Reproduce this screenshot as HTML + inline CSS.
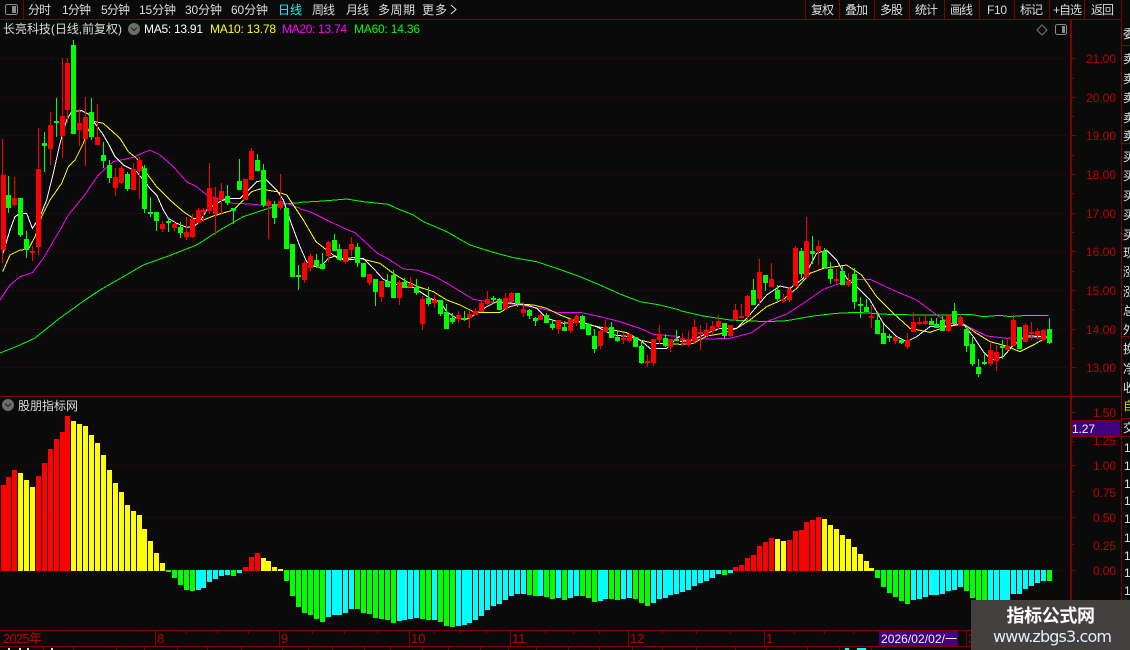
<!DOCTYPE html>
<html lang="zh">
<head>
<meta charset="utf-8">
<title>长亮科技</title>
<style>
html,body{margin:0;padding:0;background:#0a0a0a;width:1130px;height:650px;overflow:hidden}
svg{display:block}
text{font-family:"Liberation Sans","WenQuanYi Zen Hei","Noto Sans CJK SC",sans-serif;font-size:12px}
.tb text{fill:#dcdcdc}
.ax text{fill:#c00000}
.rc text{fill:#e4e4e4}
.ln{fill:none;stroke-width:3;shape-rendering:crispEdges}
</style>
</head>
<body>
<svg width="1130" height="650" viewBox="0 0 1130 650" xmlns="http://www.w3.org/2000/svg">
<rect width="1130" height="650" fill="#0a0a0a"/>

<!-- grid -->
<g stroke="#5c0c0c" stroke-width="1" stroke-dasharray="1 3" shape-rendering="crispEdges">
<path d="M1 58.5H1068M1 97.5H1068M1 135.5H1068M1 174.5H1068M1 213.5H1068M1 251.5H1068M1 290.5H1068M1 329.5H1068M1 367.5H1068M1 465.5H1068M1 517.5H1068M1 570.5H1068"/>
</g>

<!-- frame lines -->
<g stroke="#800000" fill="none" shape-rendering="crispEdges">
<path d="M0 19.5H1121.5M0 396.5H1121M0 630.5H1121M0 646.5H1121"/>
<path d="M23.5 0V19M805.5 0V19M839.5 0V19M874.5 0V19M909.5 0V19M944.5 0V19M979.5 0V19M1014.5 0V19M1049.5 0V19M1084.5 0V19M1121.5 0V650"/>
<path d="M1071 20V630" stroke-width="2"/>
<path d="M1072 420.5H1121M1072 436H1121" stroke-width="1.5"/>
<path d="M1071 58.5h5M1071 97.5h5M1071 135.5h5M1071 174.5h5M1071 213.5h5M1071 251.5h5M1071 290.5h5M1071 329.5h5M1071 367.5h5M1071 78.5h3M1071 116.5h3M1071 155.5h3M1071 193.5h3M1071 232.5h3M1071 271.5h3M1071 309.5h3M1071 348.5h3M1071 412.5h5M1071 441.5h3M1071 465.5h5M1071 491.5h3M1071 517.5h5M1071 544.5h3M1071 570.5h5"/>
<path d="M155.5 631V646M279.5 631V646M409.5 631V646M510.5 631V646M628.5 631V646M764.5 631V646M966.5 631V646M186.5 631v3M217.5 631v3M248.5 631v3M312.5 631v3M344.5 631v3M377.5 631v3M434.5 631v3M460.5 631v3M486.5 631v3M545.5 631v3M573.5 631v3M599.5 631v3M662.5 631v3M696.5 631v3M730.5 631v3M794.5 631v3M824.5 631v3M853.5 631v3"/>
<path d="M43.5 647v3M73.5 647v3M116.5 647v3M144.5 647v3M177.5 647v3M207.5 647v3M241.5 647v3M282.5 647v3M308.5 647v3M332.5 647v3M364.5 647v3M390.5 647v3M422.5 647v3M448.5 647v3M480.5 647v3M508.5 647v3M536.5 647v3M568.5 647v3M599.5 647v3M632.5 647v3M662.5 647v3M696.5 647v3M735.5 647v3M766.5 647v3M807.5 647v3M839.5 647v3M871.5 647v3"/>
<path d="M1122 45.5H1130M1122 143.5H1130M1122 239.5H1130M1122 336.5H1130M1122 418.5H1130M1122 436.5H1130"/>
</g>

<!-- toolbar -->
<rect x="5.5" y="4.5" width="12" height="10" rx="2" fill="none" stroke="#8a8a8a"/>
<rect x="12" y="6" width="4" height="7" fill="#8a8a8a"/>
<g class="tb">
<text x="28" y="14" textLength="23">分时</text>
<text x="62" y="14" textLength="29">1分钟</text>
<text x="101" y="14" textLength="29">5分钟</text>
<text x="139" y="14" textLength="37">15分钟</text>
<text x="185" y="14" textLength="37">30分钟</text>
<text x="231" y="14" textLength="37">60分钟</text>
<text x="278" y="14" textLength="24" style="fill:#00ffff">日线</text>
<text x="312" y="14" textLength="23">周线</text>
<text x="346" y="14" textLength="23">月线</text>
<text x="378" y="14" textLength="37">多周期</text>
<text x="422" y="14" textLength="25">更多</text>
<text x="811" y="14" textLength="23">复权</text>
<text x="845" y="14" textLength="23">叠加</text>
<text x="880" y="14" textLength="23">多股</text>
<text x="915" y="14" textLength="23">统计</text>
<text x="950" y="14" textLength="23">画线</text>
<text x="987" y="14" textLength="20">F10</text>
<text x="1020" y="14" textLength="23">标记</text>
<text x="1053" y="14" textLength="29">+自选</text>
<text x="1091" y="14" textLength="23">返回</text>
</g>
<path d="M451 5l5 4.5-5 4.5" fill="none" stroke="#dcdcdc"/>

<!-- main title -->
<text x="3" y="33" textLength="119" fill="#dcdcdc">长亮科技(日线,前复权)</text>
<circle cx="134" cy="29" r="6" fill="#6e6e6e"/>
<path d="M131 27.5l3 3 3-3" fill="none" stroke="#222" stroke-width="1.2"/>
<text x="144" y="33" textLength="59" fill="#ffffff">MA5: 13.91</text>
<text x="210" y="33" textLength="66" fill="#ffff00">MA10: 13.78</text>
<text x="282" y="33" textLength="65" fill="#ff00ff">MA20: 13.74</text>
<text x="354" y="33" textLength="66" fill="#00ff00">MA60: 14.36</text>
<path d="M1042 25l5 5-5 5-5-5z" fill="none" stroke="#777"/>
<rect x="1055.5" y="24.5" width="11" height="10" rx="2" fill="none" stroke="#8a8a8a"/>
<rect x="1062" y="26" width="3" height="7" fill="#8a8a8a"/>

<!-- MA lines -->
<g transform="translate(0,40) scale(.33333)">
<polyline class="ln" stroke="#00ff00" points="0,939 60,915 105,894 180,834 255,780 300,750 370,710 430,675 500,650 590,615 660,570 730,530 790,510 850,492 900,488"/>
<polyline class="ln" stroke="#ff00ff" points="0,780 30,735 60,710 97,698 130,655 180,570 205,525 250,470 295,405 340,365 400,352 425,340 450,330 480,345 520,380 560,425 590,440 620,465 660,478 700,490 750,492 800,497 860,490 900,505"/>
<polyline class="ln" stroke="#ffff00" points="8,695 30,645 60,630 85,628 105,590 125,530 150,480 185,430 205,380 225,360 250,310 265,270 285,245 310,250 330,268 360,295 385,335 410,355 440,400 470,440 510,480 550,515 580,535 610,540 640,528 700,510 730,480 755,455 780,447 830,455 860,465 880,495 900,525"/>
<polyline class="ln" stroke="#ffffff" points="9,640 30,570 45,530 60,520 80,520 97,565 120,530 140,480 160,400 180,310 200,240 215,215 245,212 265,222 285,250 310,285 330,320 345,350 370,375 410,395 430,420 450,445 470,465 490,510 505,535 530,550 560,562 580,560 600,545 620,510 650,490 680,475 720,475 745,450 770,425 800,420 830,450 850,480 870,540 885,580 900,620"/>
</g>
<g transform="translate(280,180) scale(.33333)">
<polyline class="ln" stroke="#00ff00" points="60,67 130,63 200,57 250,65 325,73 350,85 400,105 430,125 500,155 570,195 640,217 700,233 770,245 830,265 900,290 960,315 1020,342 1080,365 1140,375 1200,390"/>
<polyline class="ln" stroke="#ff00ff" points="60,87 90,95 150,125 200,148 225,158 260,190 290,218 330,240 370,267 410,270 460,287 510,315 580,358 620,365 680,370 720,375 780,385 830,397 900,397 960,410 1020,425 1080,445 1120,463 1200,470"/>
<polyline class="ln" stroke="#ffff00" points="60,105 70,120 108,185 140,210 180,240 220,232 260,240 300,250 340,280 380,305 420,322 460,335 500,360 540,375 580,395 610,398 660,397 690,380 720,372 760,375 800,385 840,405 880,420 930,435 1000,450 1040,458 1080,480 1120,490 1160,490 1200,493"/>
<polyline class="ln" stroke="#ffffff" points="60,200 80,245 100,258 120,262 145,235 165,228 200,240 250,235 280,265 310,298 340,310 370,320 400,322 420,335 450,355 480,365 500,395 530,415 560,418 590,400 620,380 650,365 700,370 740,375 770,385 800,415 850,430 900,425 950,440 1000,465 1050,470 1080,480 1110,505 1160,505 1190,475 1200,470"/>
</g>
<g transform="translate(680,200) scale(.33333)">
<polyline class="ln" stroke="#00ff00" points="0,332 70,348 150,360 260,365 320,362 400,348 470,340 530,337 640,344 800,345 870,343 910,350 960,346 990,350 1040,346 1105,346"/>
<polyline class="ln" stroke="#ff00ff" points="0,420 60,418 150,415 215,398 260,365 320,342 370,310 430,268 480,250 520,238 570,238 650,275 710,300 770,345 810,370 860,378 920,408 980,415 1040,412 1105,415"/>
<polyline class="ln" stroke="#ffff00" points="0,433 40,430 80,408 130,400 170,385 210,360 260,320 310,298 350,265 390,220 430,205 500,195 545,225 590,290 640,340 690,385 750,397 800,380 850,372 890,400 930,425 975,437 1020,455 1060,435 1100,412"/>
<polyline class="ln" stroke="#ffffff" points="0,425 40,420 80,400 120,385 170,385 200,355 230,320 260,285 300,258 330,265 370,235 410,160 440,150 470,180 500,235 530,260 570,300 610,370 650,410 680,425 710,410 750,380 800,378 850,372 880,410 910,455 935,480 970,470 1000,435 1040,408 1100,410"/>
</g>

<!-- red wicks -->
<path stroke="#ff0000" fill="none" shape-rendering="crispEdges" d="M2.5 139V263M14.5 177V207M32.5 246V261M38.5 128V255M50.5 112V165M62.5 58V158M67.5 58V123M79.5 109V146M85.5 97V166M97.5 104V145M115.5 168V196M121.5 166V184M133.5 163V190M139.5 157V199M162.5 221V232M174.5 222V231M186.5 217V240M192.5 214V238M198.5 208V224M203.5 208V222M209.5 163V214M215.5 187V235M221.5 183V215M245.5 179V200M251.5 148V180M268.5 199V239M280.5 174V210M304.5 261V283M310.5 253V271M328.5 241V262M345.5 249V264M351.5 237V256M369.5 274V285M381.5 281V302M399.5 280V305M410.5 277V287M422.5 296V330M434.5 295V308M458.5 311V323M469.5 311V328M475.5 308V315M481.5 300V312M487.5 291V306M505.5 293V310M511.5 292V302M523.5 302V317M540.5 314V320M558.5 320V334M570.5 319V333M576.5 315V326M600.5 329V349M605.5 320V332M623.5 333V344M629.5 333V342M647.5 355V367M653.5 339V366M659.5 325V344M670.5 339V352M682.5 333V346M688.5 331V347M694.5 319V344M700.5 325V350M706.5 323V337M712.5 321V334M718.5 315V330M730.5 325V337M735.5 304V321M741.5 304V319M747.5 295V320M759.5 259V306M771.5 263V287M783.5 294V303M789.5 287V302M795.5 246V286M806.5 217V278M818.5 240V265M836.5 269V284M848.5 273V287M871.5 305V328M895.5 336V344M907.5 333V349M913.5 312V332M919.5 317V325M925.5 314V325M948.5 314V332M960.5 314V325M990.5 343V366M996.5 345V371M1007.5 340V350M1013.5 315V346M1025.5 323V342M1031.5 322V340M1037.5 328V339M1043.5 329V341"/>
<!-- green wicks -->
<path stroke="#00ff00" fill="none" shape-rendering="crispEdges" d="M8.5 176V213M20.5 198V237M26.5 231V258M44.5 132V172M56.5 98V137M73.5 40V134M91.5 98V140M103.5 142V168M109.5 160V183M127.5 172V191M144.5 165V213M150.5 197V217M156.5 212V231M168.5 217V232M180.5 222V238M227.5 185V205M233.5 208V224M239.5 159V190M257.5 154V171M263.5 164V207M274.5 201V224M286.5 208V249M292.5 244V277M298.5 265V290M316.5 254V268M322.5 253V270M334.5 234V251M339.5 244V260M357.5 243V267M363.5 263V277M375.5 279V306M387.5 274V287M393.5 270V298M404.5 278V288M416.5 279V295M428.5 287V306M440.5 300V316M446.5 304V329M452.5 313V324M464.5 311V321M493.5 296V304M499.5 298V310M517.5 293V307M529.5 309V319M535.5 317V326M546.5 313V323M552.5 320V330M564.5 321V331M582.5 315V329M588.5 323V335M594.5 329V353M611.5 322V338M617.5 331V342M635.5 337V347M641.5 340V364M665.5 334V347M676.5 330V341M724.5 323V339M753.5 279V305M765.5 275V291M777.5 285V302M801.5 248V278M812.5 236V264M824.5 248V268M830.5 262V284M842.5 266V285M854.5 268V309M860.5 297V318M866.5 299V312M877.5 313V334M883.5 324V344M889.5 334V342M901.5 338V344M931.5 318V325M936.5 318V328M942.5 316V331M954.5 303V324M966.5 325V352M972.5 337V366M978.5 359V377M984.5 353V365M1002.5 340V359M1019.5 327V349M1049.5 318V344"/>
<!-- red bodies -->
<path fill="#ff0000" shape-rendering="crispEdges" d="M1 175h5V250h-5zM12 198h5V205h-5zM30 251h5V253h-5zM36 169h5V247h-5zM48 125h5V149h-5zM60 116h5V136h-5zM65 63h5V110h-5zM77 123h5V130h-5zM83 117h5V139h-5zM95 137h5V145h-5zM113 177h5V188h-5zM119 168h5V183h-5zM131 169h5V190h-5zM137 160h5V171h-5zM160 224h5V229h-5zM172 224h5V228h-5zM184 232h5V237h-5zM190 219h5V237h-5zM196 210h5V223h-5zM201 210h5V212h-5zM207 188h5V211h-5zM213 198h5V214h-5zM219 191h5V199h-5zM243 179h5V200h-5zM249 151h5V180h-5zM266 201h5V206h-5zM278 201h5V208h-5zM302 263h5V280h-5zM308 256h5V268h-5zM326 242h5V256h-5zM343 249h5V262h-5zM349 244h5V250h-5zM367 274h5V283h-5zM379 281h5V297h-5zM397 282h5V298h-5zM408 284h5V287h-5zM420 299h5V324h-5zM432 300h5V303h-5zM456 315h5V319h-5zM467 314h5V318h-5zM473 311h5V315h-5zM479 303h5V312h-5zM485 299h5V304h-5zM503 298h5V309h-5zM509 293h5V302h-5zM521 309h5V313h-5zM538 315h5V320h-5zM556 320h5V329h-5zM568 319h5V331h-5zM574 316h5V323h-5zM598 331h5V346h-5zM603 327h5V332h-5zM621 338h5V340h-5zM627 334h5V341h-5zM645 361h5V363h-5zM651 339h5V363h-5zM657 334h5V340h-5zM668 339h5V347h-5zM680 338h5V340h-5zM686 339h5V345h-5zM692 327h5V341h-5zM698 332h5V334h-5zM704 330h5V336h-5zM710 326h5V331h-5zM716 321h5V327h-5zM728 325h5V336h-5zM733 310h5V320h-5zM739 316h5V318h-5zM745 296h5V316h-5zM757 272h5V299h-5zM769 279h5V287h-5zM781 299h5V301h-5zM787 289h5V300h-5zM793 248h5V286h-5zM804 241h5V277h-5zM816 246h5V251h-5zM834 279h5V281h-5zM846 281h5V285h-5zM869 316h5V318h-5zM893 337h5V341h-5zM905 340h5V347h-5zM911 322h5V332h-5zM917 322h5V324h-5zM923 321h5V324h-5zM946 316h5V331h-5zM958 317h5V325h-5zM988 350h5V364h-5zM994 352h5V361h-5zM1005 346h5V350h-5zM1011 320h5V346h-5zM1023 325h5V342h-5zM1029 332h5V334h-5zM1035 331h5V336h-5zM1041 330h5V340h-5z"/>
<!-- green bodies -->
<path fill="#00ff00" shape-rendering="crispEdges" d="M6 195h5V208h-5zM18 198h5V235h-5zM24 239h5V250h-5zM42 143h5V146h-5zM54 121h5V123h-5zM71 45h5V134h-5zM89 112h5V137h-5zM101 155h5V161h-5zM107 165h5V178h-5zM125 174h5V189h-5zM142 168h5V209h-5zM148 212h5V214h-5zM154 212h5V221h-5zM166 221h5V223h-5zM178 227h5V233h-5zM225 196h5V203h-5zM231 208h5V211h-5zM237 181h5V190h-5zM255 160h5V171h-5zM261 170h5V205h-5zM272 204h5V218h-5zM284 208h5V249h-5zM290 244h5V277h-5zM296 275h5V277h-5zM314 260h5V266h-5zM320 264h5V269h-5zM332 240h5V251h-5zM337 249h5V260h-5zM355 247h5V263h-5zM361 263h5V277h-5zM373 279h5V292h-5zM385 281h5V287h-5zM391 275h5V298h-5zM402 282h5V288h-5zM414 287h5V293h-5zM426 298h5V304h-5zM438 300h5V314h-5zM444 312h5V329h-5zM450 318h5V322h-5zM462 318h5V320h-5zM491 298h5V300h-5zM497 299h5V310h-5zM515 293h5V304h-5zM527 310h5V316h-5zM533 318h5V321h-5zM544 315h5V323h-5zM550 324h5V328h-5zM562 327h5V331h-5zM580 316h5V329h-5zM586 324h5V335h-5zM592 336h5V349h-5zM609 327h5V338h-5zM615 337h5V341h-5zM633 337h5V347h-5zM639 346h5V363h-5zM663 338h5V346h-5zM674 339h5V341h-5zM722 323h5V336h-5zM751 290h5V305h-5zM763 275h5V283h-5zM775 290h5V299h-5zM799 251h5V274h-5zM810 251h5V254h-5zM822 251h5V268h-5zM828 269h5V279h-5zM840 271h5V285h-5zM852 274h5V302h-5zM858 304h5V306h-5zM864 307h5V312h-5zM875 320h5V334h-5zM881 333h5V344h-5zM887 336h5V338h-5zM899 340h5V343h-5zM929 321h5V325h-5zM934 324h5V328h-5zM940 320h5V331h-5zM952 311h5V324h-5zM964 329h5V346h-5zM970 344h5V364h-5zM976 367h5V374h-5zM982 362h5V364h-5zM1000 346h5V348h-5zM1017 327h5V349h-5zM1047 329h5V343h-5z"/>

<!-- sub chart bars -->
<path fill="#ff0000" shape-rendering="crispEdges" d="M1 485h5V571h-5zM6 477h5V571h-5zM12 470h5V571h-5zM36 476h5V571h-5zM42 463h5V571h-5zM48 449h5V571h-5zM54 439h5V571h-5zM60 432h5V571h-5zM65 416h5V571h-5zM243 567h5V571h-5zM249 557h5V571h-5zM255 553h5V571h-5zM733 567h5V571h-5zM739 565h5V571h-5zM745 558h5V571h-5zM751 555h5V571h-5zM757 546h5V571h-5zM763 542h5V571h-5zM769 538h5V571h-5zM787 540h5V571h-5zM793 531h5V571h-5zM799 530h5V571h-5zM804 522h5V571h-5zM810 520h5V571h-5zM816 517h5V571h-5z"/>
<path fill="#ffff00" shape-rendering="crispEdges" d="M18 473h5V571h-5zM24 480h5V571h-5zM30 487h5V571h-5zM71 421h5V571h-5zM77 424h5V571h-5zM83 426h5V571h-5zM89 435h5V571h-5zM95 443h5V571h-5zM101 455h5V571h-5zM107 470h5V571h-5zM113 483h5V571h-5zM119 492h5V571h-5zM125 505h5V571h-5zM131 511h5V571h-5zM137 515h5V571h-5zM142 529h5V571h-5zM148 541h5V571h-5zM154 553h5V571h-5zM160 563h5V571h-5zM261 558h5V571h-5zM266 561h5V571h-5zM272 567h5V571h-5zM278 569h5V571h-5zM775 539h5V571h-5zM781 541h5V571h-5zM822 519h5V571h-5zM828 525h5V571h-5zM834 529h5V571h-5zM840 535h5V571h-5zM846 539h5V571h-5zM852 547h5V571h-5zM858 554h5V571h-5zM864 561h5V571h-5zM869 568h5V571h-5z"/>
<path fill="#00ff00" shape-rendering="crispEdges" d="M166 570h5V572h-5zM172 570h5V578h-5zM178 570h5V585h-5zM184 570h5V590h-5zM190 570h5V591h-5zM231 570h5V576h-5zM284 570h5V581h-5zM290 570h5V596h-5zM296 570h5V607h-5zM302 570h5V613h-5zM308 570h5V615h-5zM314 570h5V619h-5zM320 570h5V622h-5zM355 570h5V609h-5zM361 570h5V613h-5zM367 570h5V614h-5zM373 570h5V618h-5zM379 570h5V619h-5zM385 570h5V620h-5zM391 570h5V623h-5zM420 570h5V619h-5zM426 570h5V620h-5zM438 570h5V622h-5zM444 570h5V626h-5zM450 570h5V627h-5zM527 570h5V595h-5zM533 570h5V596h-5zM544 570h5V597h-5zM550 570h5V599h-5zM562 570h5V600h-5zM580 570h5V596h-5zM586 570h5V598h-5zM592 570h5V602h-5zM609 570h5V599h-5zM615 570h5V600h-5zM633 570h5V599h-5zM639 570h5V603h-5zM645 570h5V606h-5zM722 570h5V575h-5zM875 570h5V578h-5zM881 570h5V587h-5zM887 570h5V593h-5zM893 570h5V597h-5zM899 570h5V601h-5zM905 570h5V604h-5zM964 570h5V591h-5zM970 570h5V598h-5zM976 570h5V610h-5zM982 570h5V610h-5zM1047 570h5V581h-5z"/>
<path fill="#00ffff" shape-rendering="crispEdges" d="M196 570h5V590h-5zM201 570h5V588h-5zM207 570h5V582h-5zM213 570h5V579h-5zM219 570h5V576h-5zM225 570h5V575h-5zM237 570h5V573h-5zM326 570h5V617h-5zM332 570h5V615h-5zM337 570h5V615h-5zM343 570h5V613h-5zM349 570h5V609h-5zM397 570h5V621h-5zM402 570h5V620h-5zM408 570h5V619h-5zM414 570h5V618h-5zM432 570h5V620h-5zM456 570h5V626h-5zM462 570h5V625h-5zM467 570h5V623h-5zM473 570h5V620h-5zM479 570h5V616h-5zM485 570h5V610h-5zM491 570h5V606h-5zM497 570h5V604h-5zM503 570h5V600h-5zM509 570h5V596h-5zM515 570h5V594h-5zM521 570h5V594h-5zM538 570h5V596h-5zM556 570h5V598h-5zM568 570h5V598h-5zM574 570h5V596h-5zM598 570h5V601h-5zM603 570h5V599h-5zM621 570h5V599h-5zM627 570h5V598h-5zM651 570h5V603h-5zM657 570h5V599h-5zM663 570h5V598h-5zM668 570h5V595h-5zM674 570h5V594h-5zM680 570h5V592h-5zM686 570h5V590h-5zM692 570h5V586h-5zM698 570h5V583h-5zM704 570h5V581h-5zM710 570h5V578h-5zM716 570h5V574h-5zM728 570h5V573h-5zM911 570h5V600h-5zM917 570h5V599h-5zM923 570h5V597h-5zM929 570h5V595h-5zM934 570h5V595h-5zM940 570h5V594h-5zM946 570h5V591h-5zM952 570h5V590h-5zM958 570h5V587h-5zM988 570h5V610h-5zM994 570h5V610h-5zM1000 570h5V610h-5zM1005 570h5V610h-5zM1011 570h5V594h-5zM1017 570h5V594h-5zM1023 570h5V589h-5zM1029 570h5V586h-5zM1035 570h5V583h-5zM1041 570h5V581h-5z"/>

<!-- sub title -->
<circle cx="8" cy="405" r="6" fill="#6e6e6e"/>
<path d="M5 403.5l3 3 3-3" fill="none" stroke="#222" stroke-width="1.2"/>
<text x="18" y="410" textLength="60" fill="#dcdcdc">股朋指标网</text>

<!-- axis labels -->
<g class="ax">
<text x="1086" y="63" textLength="30">21.00</text>
<text x="1086" y="102" textLength="30">20.00</text>
<text x="1086" y="140" textLength="30">19.00</text>
<text x="1086" y="179" textLength="30">18.00</text>
<text x="1086" y="218" textLength="30">17.00</text>
<text x="1086" y="256" textLength="30">16.00</text>
<text x="1086" y="295" textLength="30">15.00</text>
<text x="1086" y="334" textLength="30">14.00</text>
<text x="1086" y="372" textLength="30">13.00</text>
<text x="1093" y="417" textLength="23">1.50</text>
<text x="1093" y="445" textLength="23">1.25</text>
<text x="1093" y="470" textLength="23">1.00</text>
<text x="1093" y="497" textLength="23">0.75</text>
<text x="1093" y="522" textLength="23">0.50</text>
<text x="1093" y="550" textLength="23">0.25</text>
<text x="1093" y="575" textLength="23">0.00</text>
<text x="3" y="643" textLength="39" style="font-size:13px">2025年</text>
<text x="157" y="643" style="font-size:13px">8</text>
<text x="281" y="643" style="font-size:13px">9</text>
<text x="411" y="643" style="font-size:13px">10</text>
<text x="512" y="643" style="font-size:13px">11</text>
<text x="630" y="643" style="font-size:13px">12</text>
<text x="766" y="643" style="font-size:13px">1</text>
<text x="968" y="643" style="font-size:13px">3</text>
</g>

<!-- value box -->
<rect x="1072" y="421" width="48" height="15" fill="#400080"/>
<text x="1072" y="433" textLength="23" fill="#f0f0f0">1.27</text>
<!-- date box -->
<rect x="879" y="631" width="79" height="15" fill="#400080"/>
<text x="881" y="643" textLength="76" fill="#f0f0f0">2026/02/02/一</text>

<!-- right column clipped -->
<g class="rc">
<text x="1123" y="38">委</text>
<text x="1123" y="63">卖</text>
<text x="1123" y="83">卖</text>
<text x="1123" y="102">卖</text>
<text x="1123" y="122">卖</text>
<text x="1123" y="140">卖</text>
<text x="1123" y="161">买</text>
<text x="1123" y="180">买</text>
<text x="1123" y="200">买</text>
<text x="1123" y="219">买</text>
<text x="1123" y="239">买</text>
<text x="1123" y="257">现</text>
<text x="1123" y="276">涨</text>
<text x="1123" y="296">涨</text>
<text x="1123" y="315">总</text>
<text x="1123" y="334">外</text>
<text x="1123" y="353">换</text>
<text x="1123" y="373">净</text>
<text x="1123" y="392">收</text>
<text x="1123" y="410" style="fill:#d0d000">自</text>
<text x="1123" y="432">交</text>
<text x="1124" y="452">1</text>
<text x="1124" y="470">1</text>
<text x="1124" y="488">1</text>
<text x="1124" y="505">1</text>
<text x="1124" y="523">1</text>
<text x="1124" y="542">1</text>
<text x="1124" y="560">1</text>
<text x="1124" y="577">1</text>
<text x="1124" y="595">1</text>
</g>

<!-- bottom tab slivers -->
<path d="M8 648h2v2H8zM19 648h2v2h-2zM27 648h2v2h-2zM51 648h2v2h-2z" fill="#dcdcdc"/>
<path d="M845 648h4v2h-4zM857 648h9v2h-9z" fill="#00ffff"/>

<!-- watermark -->
<rect x="971" y="600" width="159" height="50" fill="#43403f"/>
<text x="1006.5" y="622" textLength="88.5" fill="#ffffff" style="font-size:18px;font-weight:bold;font-family:'Noto Sans CJK SC','Liberation Sans',sans-serif">指标公式网</text>
<text x="993" y="642" textLength="119" fill="#dfeeff" style="font-size:16px;font-family:'DejaVu Sans','Liberation Sans',sans-serif">www.zbgs3.com</text>
</svg>
</body>
</html>
